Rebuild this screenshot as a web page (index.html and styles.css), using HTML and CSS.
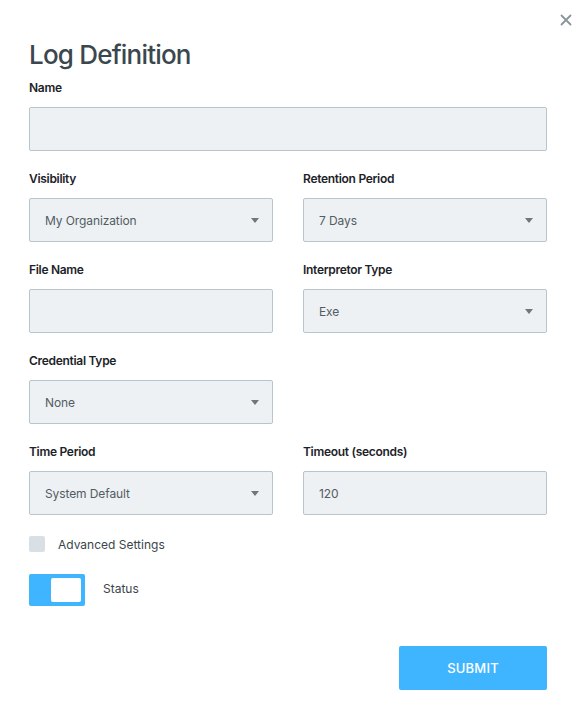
FILE: index.html
```html
<!DOCTYPE html>
<html>
<head>
<meta charset="utf-8">
<link rel="stylesheet" href="styles.css">
</head>
<body>
<div class="modal">
  <button class="close" aria-label="Close">
    <svg width="12" height="12" viewBox="0 0 12 12"><path d="M1.5 1.5 L10.5 10.5 M10.5 1.5 L1.5 10.5" stroke="#8a9499" stroke-width="1.8" stroke-linecap="round"/></svg>
  </button>
  <h1 class="title">Log Definition</h1>
  <div class="field">
    <label class="label">Name</label>
    <div class="input"></div>
  </div>
  <div class="grid">
    <div class="field">
      <label class="label">Visibility</label>
      <div class="input select"><span>My Organization</span><i class="caret"></i></div>
    </div>
    <div class="field">
      <label class="label">Retention Period</label>
      <div class="input select"><span>7 Days</span><i class="caret"></i></div>
    </div>
    <div class="field">
      <label class="label">File Name</label>
      <div class="input"></div>
    </div>
    <div class="field">
      <label class="label">Interpretor Type</label>
      <div class="input select"><span>Exe</span><i class="caret"></i></div>
    </div>
    <div class="field">
      <label class="label">Credential Type</label>
      <div class="input select"><span>None</span><i class="caret"></i></div>
    </div>
    <div class="field"></div>
    <div class="field">
      <label class="label">Time Period</label>
      <div class="input select"><span>System Default</span><i class="caret"></i></div>
    </div>
    <div class="field">
      <label class="label">Timeout (seconds)</label>
      <div class="input"><span>120</span></div>
    </div>
  </div>
  <div class="check-row">
    <span class="checkbox"></span>
    <span class="check-text">Advanced Settings</span>
  </div>
  <div class="toggle-row">
    <span class="toggle"><span class="knob"></span></span>
    <span class="toggle-text">Status</span>
  </div>
  <div class="actions">
    <button class="submit">SUBMIT</button>
  </div>
</div>
</body>
</html>
```
FILE: styles.css
```css
* { box-sizing: border-box; }
html, body { margin: 0; padding: 0; background: #fff; }
body { font-family: "Inter", "Roboto", "Liberation Sans", sans-serif; color: #2b343a; }
.modal {
  position: relative;
  width: 582px;
  height: 706px;
  padding: 38px 35px 0 29px;
}
.close {
  position: absolute;
  top: 14px;
  right: 10px;
  width: 12px;
  height: 12px;
  padding: 0;
  border: 0;
  background: none;
  display: block;
}
.close svg { display: block; }
.title {
  margin: 0 0 7px 0;
  font-size: 26px;
  line-height: 34px;
  font-weight: 500;
  color: #3b474e;
  letter-spacing: -0.8px;
}
.label {
  display: block;
  font-size: 12px;
  line-height: 18px;
  font-weight: 600;
  color: #1c2328;
  letter-spacing: -0.3px;
  margin-bottom: 10px;
}
.field { margin-bottom: 19px; }
.grid {
  display: grid;
  grid-template-columns: 244px 244px;
  column-gap: 30px;
}
.input {
  height: 44px;
  background: #edf1f4;
  border: 1px solid #b8c5cc;
  border-radius: 2px;
  display: flex;
  align-items: center;
  padding: 0 13px 0 15px;
  font-size: 12px;
  letter-spacing: -0.1px;
  color: #535c62;
}
.select { justify-content: space-between; }
.caret {
  width: 0;
  height: 0;
  border-left: 4px solid transparent;
  border-right: 4px solid transparent;
  border-top: 5px solid #6f777c;
}
.check-row {
  display: flex;
  align-items: center;
  margin-top: 2px;
  height: 16px;
}
.checkbox {
  width: 16px;
  height: 16px;
  background: #d8e0e5;
  border-radius: 2px;
}
.check-text {
  margin-left: 13px;
  font-size: 12px;
  color: #3c454b;
}
.toggle-row {
  display: flex;
  align-items: center;
  margin-top: 22px;
}
.toggle {
  width: 56px;
  height: 32px;
  background: #3fb5ff;
  border-radius: 2px;
  display: flex;
  align-items: center;
  justify-content: flex-end;
  padding-right: 4px;
}
.knob {
  width: 30px;
  height: 24px;
  background: #fff;
  border-radius: 2px;
}
.toggle-text {
  margin-left: 18px;
  font-size: 12px;
  line-height: 14px;
  padding-bottom: 2px;
  color: #3c454b;
}
.actions {
  display: flex;
  justify-content: flex-end;
  margin-top: 40px;
}
.submit {
  width: 148px;
  height: 44px;
  border: 0;
  border-radius: 2px;
  background: #3fb5ff;
  color: #fff;
  font-family: inherit;
  font-size: 13px;
  font-weight: 500;
  letter-spacing: 0.2px;
}
```
